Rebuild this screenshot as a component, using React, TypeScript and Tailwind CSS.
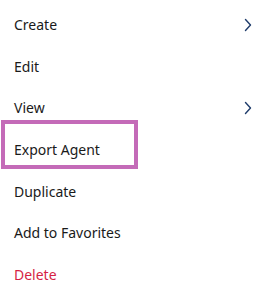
import React from "react";

const items: { label: string; sub?: boolean; danger?: boolean }[] = [
  { label: "Create", sub: true },
  { label: "Edit" },
  { label: "View", sub: true },
  { label: "Export Agent" },
  { label: "Duplicate" },
  { label: "Add to Favorites" },
  { label: "Delete", danger: true },
];

function Chevron() {
  return (
    <svg width="8" height="14" viewBox="0 0 8 14" fill="none" className="text-[#1f3c6b]">
      <path d="M1.5 1.5 L6.5 7 L1.5 12.5" stroke="currentColor" strokeWidth="1.4" strokeLinecap="round" strokeLinejoin="round" />
    </svg>
  );
}

export default function App() {
  return (
    <div className="relative w-[265px] h-[296px] bg-white" style={{ fontFamily: '"Noto Sans", "Open Sans", sans-serif' }}>
      <ul className="flex flex-col pt-[4.5px]">
        {items.map((it) => (
          <li key={it.label} className="flex h-[41.6px] items-center justify-between pl-[14px] pr-[13px]">
            <span className={`text-[14px] leading-5 ${it.danger ? "text-[#d61f45]" : "text-[#1a1a1a]"}`}>{it.label}</span>
            {it.sub && <Chevron />}
          </li>
        ))}
      </ul>
      <div className="absolute left-[1px] top-[120px] w-[137px] h-[49px] border-4 border-[#c46bb8]" />
    </div>
  );
}
